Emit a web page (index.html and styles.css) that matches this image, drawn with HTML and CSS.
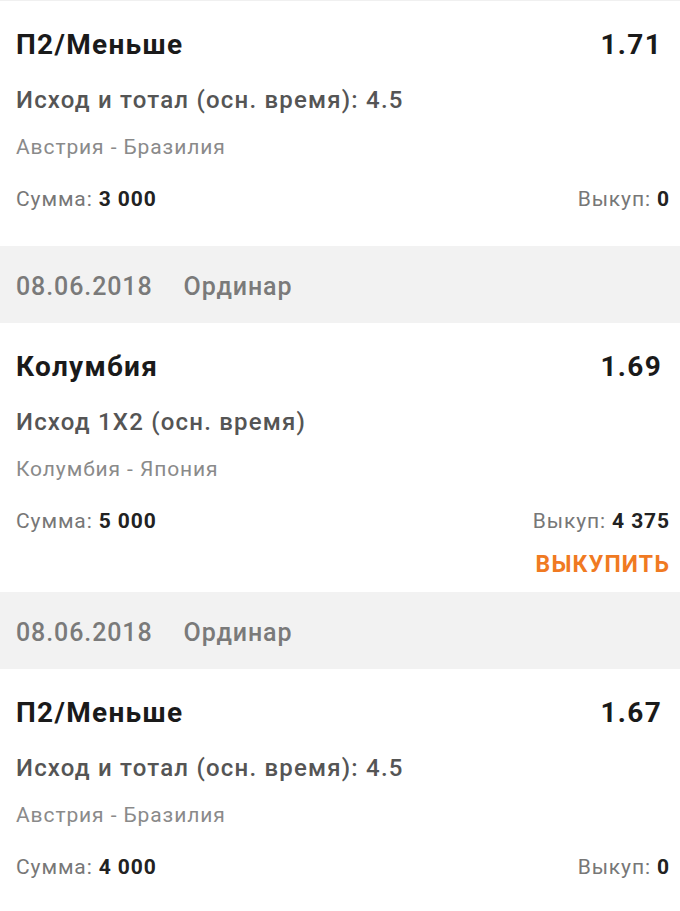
FILE: index.html
```html
<!DOCTYPE html>
<html lang="ru">
<head>
    <meta charset="UTF-8">
    <meta name="viewport" content="width=device-width, initial-scale=1.0">
    <title>История ставок</title>
    <link rel="stylesheet" href="styles.css">
</head>
<body>
    <div class="history">
        <div class="bet">
            <div class="bet-head">
                <span class="bet-name">П2/Меньше</span>
                <span class="bet-odds">1.71</span>
            </div>
            <div class="bet-market">Исход и тотал (осн. время): 4.5</div>
            <div class="bet-event">Австрия - Бразилия</div>
            <div class="bet-sums">
                <span>Сумма: <b>3 000</b></span>
                <span>Выкуп: <b>0</b></span>
            </div>
        </div>

        <div class="bet-date">
            <span>08.06.2018</span>
            <span>Ординар</span>
        </div>

        <div class="bet sellable">
            <div class="bet-head">
                <span class="bet-name">Колумбия</span>
                <span class="bet-odds">1.69</span>
            </div>
            <div class="bet-market">Исход 1X2 (осн. время)</div>
            <div class="bet-event">Колумбия - Япония</div>
            <div class="bet-sums">
                <span>Сумма: <b>5 000</b></span>
                <span>Выкуп: <b>4 375</b></span>
            </div>
            <div class="bet-sell">
                <a href="#">ВЫКУПИТЬ</a>
            </div>
        </div>

        <div class="bet-date">
            <span>08.06.2018</span>
            <span>Ординар</span>
        </div>

        <div class="bet">
            <div class="bet-head">
                <span class="bet-name">П2/Меньше</span>
                <span class="bet-odds">1.67</span>
            </div>
            <div class="bet-market">Исход и тотал (осн. время): 4.5</div>
            <div class="bet-event">Австрия - Бразилия</div>
            <div class="bet-sums">
                <span>Сумма: <b>4 000</b></span>
                <span>Выкуп: <b>0</b></span>
            </div>
        </div>
    </div>
</body>
</html>
```

FILE: styles.css
```css
body {
    font-family: 'Roboto', 'Noto Sans', sans-serif;
    background-color: #fff;
    margin: 0;
    padding: 0;
}
.history {
    border-top: 1px solid #f0f0f0;
}
.bet {
    padding: 23px 10px 32px 16px;
}
.bet.sellable {
    padding-bottom: 12px;
}
.bet-head {
    display: flex;
    justify-content: space-between;
    align-items: center;
    height: 40px;
    padding-right: 8px;
}
.bet-name,
.bet-odds {
    font-size: 28px;
    font-weight: bold;
    letter-spacing: 1.3px;
    color: #1a1a1a;
}
.bet-market {
    margin-top: 18px;
    line-height: 36px;
    font-size: 24px;
    font-weight: 500;
    letter-spacing: 1.2px;
    color: #555;
}
.bet-event {
    margin-top: 14px;
    line-height: 30px;
    font-size: 21px;
    letter-spacing: 0.9px;
    color: #8a8a8a;
}
.bet-sums {
    display: flex;
    justify-content: space-between;
    margin-top: 22px;
    line-height: 30px;
    font-size: 21px;
    letter-spacing: 0.9px;
    color: #777;
}
.bet-sums b {
    color: #222;
}
.bet-sell {
    display: flex;
    justify-content: flex-end;
    margin-top: 14px;
    line-height: 30px;
}
.bet-sell a {
    font-size: 23px;
    font-weight: bold;
    letter-spacing: 1.2px;
    color: #f07a22;
    text-decoration: none;
}
.bet-date {
    display: flex;
    align-items: center;
    gap: 31px;
    box-sizing: border-box;
    height: 77px;
    padding: 3px 0 0 16px;
    background-color: #f2f2f2;
    font-size: 25px;
    font-weight: 500;
    letter-spacing: 0.9px;
    color: #7a7a7a;
}
```
